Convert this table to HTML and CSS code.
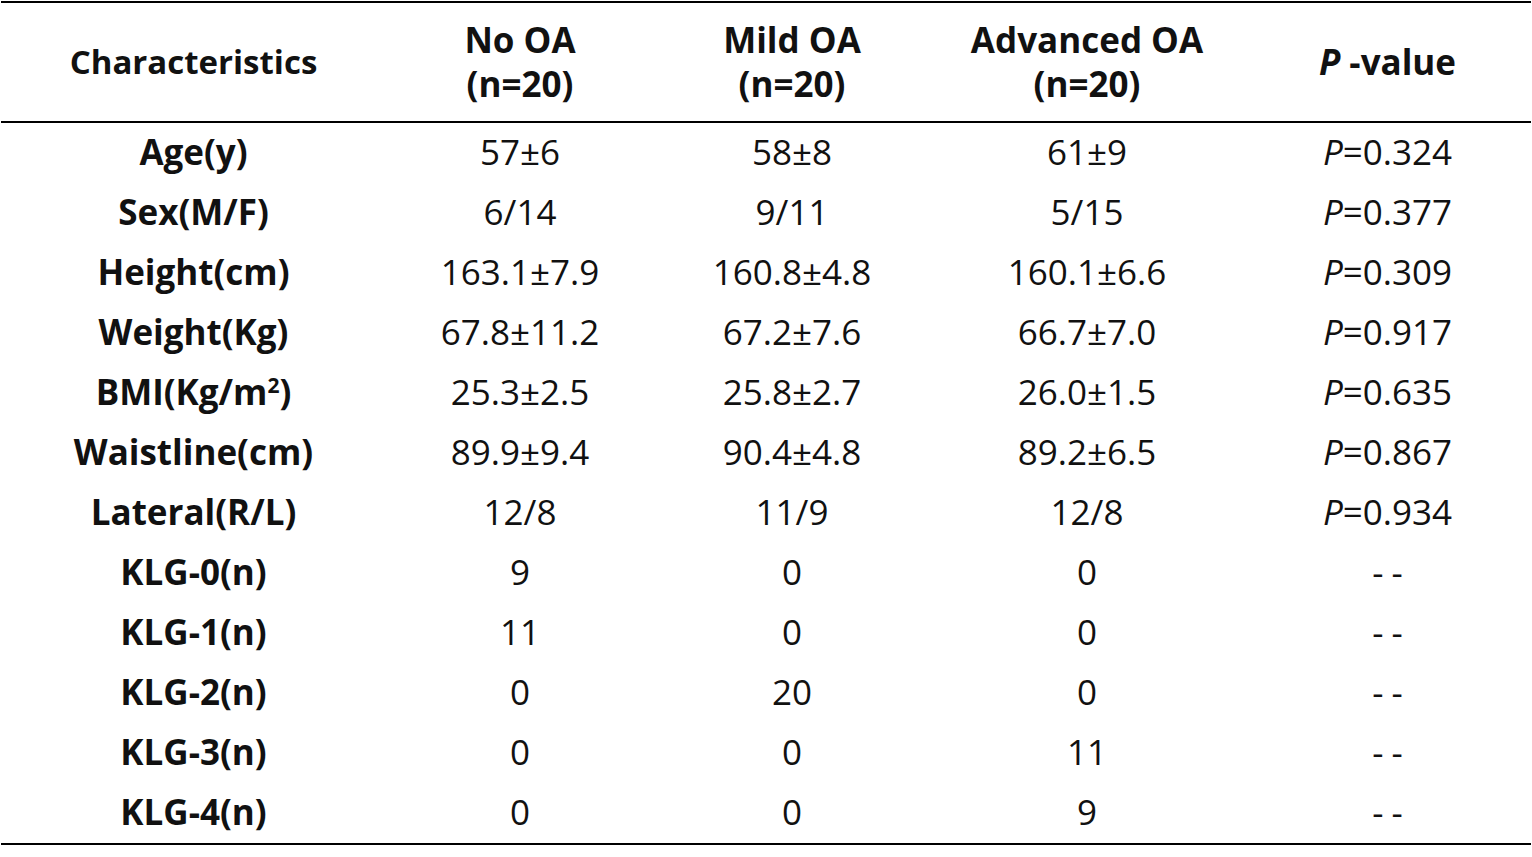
FILE: index.html
```html
<!DOCTYPE html>
<html>
<head>
<meta charset="utf-8">
<link rel="stylesheet" href="styles.css">
</head>
<body>
<table class="tbl">
  <colgroup>
    <col class="c1"><col class="c2"><col class="c3"><col class="c4"><col class="c5">
  </colgroup>
  <thead>
    <tr>
      <th class="first">Characteristics</th>
      <th>No OA<br>(n=20)</th>
      <th>Mild OA<br>(n=20)</th>
      <th>Advanced OA<br>(n=20)</th>
      <th><i>P</i> -value</th>
    </tr>
  </thead>
  <tbody>
    <tr><th>Age(y)</th><td>57±6</td><td>58±8</td><td>61±9</td><td><i>P</i>=0.324</td></tr>
    <tr><th>Sex(M/F)</th><td>6/14</td><td>9/11</td><td>5/15</td><td><i>P</i>=0.377</td></tr>
    <tr><th>Height(cm)</th><td>163.1±7.9</td><td>160.8±4.8</td><td>160.1±6.6</td><td><i>P</i>=0.309</td></tr>
    <tr><th>Weight(Kg)</th><td>67.8±11.2</td><td>67.2±7.6</td><td>66.7±7.0</td><td><i>P</i>=0.917</td></tr>
    <tr><th>BMI(Kg/m<sup>2</sup>)</th><td>25.3±2.5</td><td>25.8±2.7</td><td>26.0±1.5</td><td><i>P</i>=0.635</td></tr>
    <tr><th>Waistline(cm)</th><td>89.9±9.4</td><td>90.4±4.8</td><td>89.2±6.5</td><td><i>P</i>=0.867</td></tr>
    <tr><th>Lateral(R/L)</th><td>12/8</td><td>11/9</td><td>12/8</td><td><i>P</i>=0.934</td></tr>
    <tr><th>KLG-0(n)</th><td>9</td><td>0</td><td>0</td><td class="dash">--</td></tr>
    <tr><th>KLG-1(n)</th><td>11</td><td>0</td><td>0</td><td class="dash">--</td></tr>
    <tr><th>KLG-2(n)</th><td>0</td><td>20</td><td>0</td><td class="dash">--</td></tr>
    <tr><th>KLG-3(n)</th><td>0</td><td>0</td><td>11</td><td class="dash">--</td></tr>
    <tr><th>KLG-4(n)</th><td>0</td><td>0</td><td>9</td><td class="dash">--</td></tr>
  </tbody>
</table>
</body>
</html>
```

FILE: styles.css
```css
html, body {
  margin: 0;
  padding: 0;
  background: #fff;
}
body {
  padding: 1px 0 0 1px;
}
.tbl {
  width: 1530px;
  border-collapse: collapse;
  table-layout: fixed;
  font-family: "Open Sans", "Noto Sans", sans-serif;
  color: #111;
  border-top: 2px solid #000;
  border-bottom: 2px solid #000;
}
.c1 { width: 385px; }
.c2 { width: 268px; }
.c3 { width: 276px; }
.c4 { width: 314px; }
.c5 { width: 287px; }
.tbl thead th {
  height: 114px;
  padding: 2px 0 2px 0;
  font-size: 35px;
  font-weight: 700;
  line-height: 44px;
  text-align: center;
  vertical-align: middle;
  border-bottom: 2px solid #000;
}
.tbl thead th.first {
  font-size: 33px;
}
.tbl tbody th,
.tbl tbody td {
  height: 52px;
  padding: 3px 0 5px 0;
  font-size: 35px;
  line-height: 52px;
  text-align: center;
  vertical-align: middle;
}
.tbl tbody th {
  font-weight: 700;
}
.tbl tbody td {
  font-weight: 400;
}
.tbl sup {
  font-size: 21px;
  line-height: 0;
  vertical-align: 12px;
}
.tbl tbody td.dash {
  letter-spacing: 8px;
  text-indent: 8px;
}
```
